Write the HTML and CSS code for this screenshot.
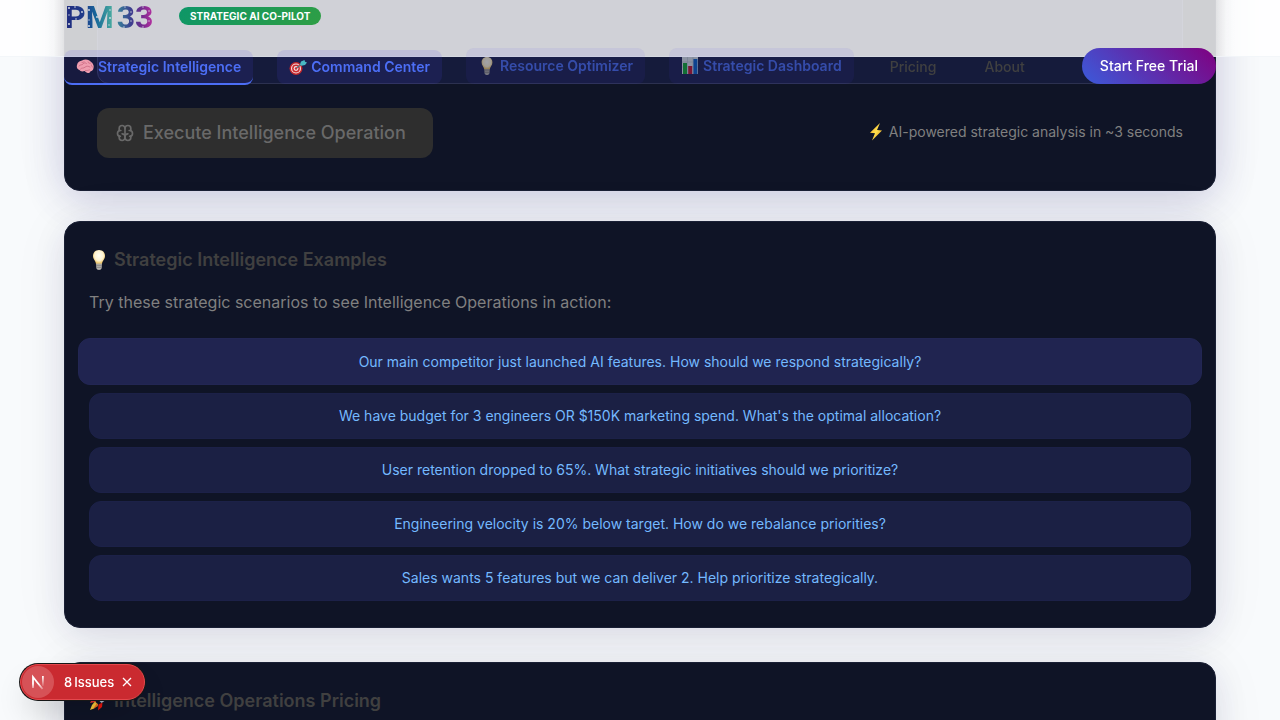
FILE: index.html
```html
<!DOCTYPE html>
<html lang="en">
<head>
<meta charset="utf-8">
<meta name="viewport" content="width=device-width, initial-scale=1">
<title>PM33 Strategic Intelligence</title>
<link rel="stylesheet" href="styles.css">
</head>
<body>
<svg class="defs" aria-hidden="true">
  <defs>
    <radialGradient id="glass" cx=".5" cy=".4" r=".6"><stop offset="0" stop-color="#fffef4"/><stop offset=".6" stop-color="#fff3cf"/><stop offset="1" stop-color="#e9b94c"/></radialGradient>
    <linearGradient id="bolt" x1="0" y1="0" x2="1" y2="1"><stop offset="0" stop-color="#f29a1c"/><stop offset=".5" stop-color="#ffe24d"/><stop offset="1" stop-color="#d98410"/></linearGradient>
  </defs>
  <symbol id="i-bulb" viewBox="0 0 20 20">
    <path d="M10 0C6 0 4 2.800 4 6c0 3.300 2.600 4.500 3 8h6c.4-3.500 3-4.700 3-8 0-3.200-2-6-6-6z" fill="url(#glass)"/>
    <path d="M7 13.500h6l-.3 4.500c-.2 1.200-1.200 2-2.700 2s-2.500-.8-2.700-2z" fill="#b4b1ac"/>
    <path d="M7.200 15.300h5.600M7.400 17.300h5.200" stroke="#77736e" stroke-width=".7"/>
  </symbol>
  <symbol id="i-bolt" viewBox="0 0 16 18"><path d="M12 0L2 9.800l5 .4L4 17.500 14 7.500l-5-.5z" fill="url(#bolt)"/></symbol>
  <symbol id="i-target" viewBox="0 0 18 18">
    <circle cx="7" cy="10.500" r="6.500" fill="#c5262b"/><circle cx="7" cy="10.500" r="5" fill="#f4dfe0"/><circle cx="7" cy="10.500" r="3.900" fill="#cd2b30"/><circle cx="7" cy="10.500" r="2.400" fill="#f4dfe0"/><circle cx="7" cy="10.500" r="1.200" fill="#cd2b30"/>
    <path d="M7.500 10L14 5" stroke="#5b6d78" stroke-width="1.300"/><path d="M11 6.500l1-3L15.500 2l.5 1.700L18 4.500l-2 2.500-3.500.8z" fill="#49b8c4"/>
  </symbol>
  <symbol id="i-chart" viewBox="0 0 18 18">
    <path d="M1 0h16v17H1z" fill="#dce4ea"/><path d="M1 5h16M1 10h16M6.500 0v17M12 0v17" stroke="#b2c0c9" stroke-width=".6"/>
    <path d="M2 6h4v11H2z" fill="#12a832"/><path d="M7.200 9h4v8h-4z" fill="#c41431"/><path d="M12.400 2h4v15h-4z" fill="#0b60c9"/>
  </symbol>
  <symbol id="i-brain" viewBox="0 0 18 18">
    <path d="M1 7c.5-3 3-4 5-4.500C9 .8 13.500 1.500 15 4c2 1.200 3.200 3.500 2.500 6 0 2-1.500 3-3 3.200-.3 1.500-1.800 2.300-3.500 1.600-1-.3-1.800-1-2.300-1.800-2 .7-4.700.5-5.200-1C1.400 11.500.3 9.500 1 7z" fill="#ef9daf"/>
    <path d="M3 8c1.500-2 3-.5 4-2s2.500-1.500 3.500-.5M4.500 11c1.200-1.600 3-.4 4.500-1.800S12.500 8 14 9M6 4.500c1 .2 1.500 0 2-.8M12 4c.2 1.200 1.500 1.500 2.500 1.200M9.500 12.500c1.200.3 2.500-.2 4-.6M15.500 7c-.2 1 .2 1.500 1 2" fill="none" stroke="#c4607a" stroke-width=".7" stroke-linecap="round"/>
  </symbol>
  <symbol id="i-rocket" viewBox="0 0 20 20">
    <path d="M19 1c-5 0-8.500 2-11 6.500L12.500 12C17 9.500 19 6 19 1z" fill="#a9bccb"/><circle cx="13.500" cy="6.500" r="1.800" fill="#2465a6"/>
    <path d="M8.500 6.500L3 8l-2 4 5.500-1z" fill="#e5352d"/><path d="M13.500 11.500L13 16l-4 3.500.5-6z" fill="#e5150d"/>
    <path d="M6 10.500L3 14l-2 5 4-1.500 4-4z" fill="#f8c93a"/><path d="M8 12l-4 6 5-3z" fill="#f2711c"/>
  </symbol>
</svg>

<header class="header">
  <div class="brand-row">
    <svg class="logo" viewBox="0 0 91 32" role="img" aria-label="PM 33">
      <defs>
        <linearGradient id="ink" gradientUnits="userSpaceOnUse" x1="0" y1="0" x2="88" y2="0">
          <stop offset="0" stop-color="#20297c"/><stop offset=".24" stop-color="#1f3d8c"/>
          <stop offset=".36" stop-color="#17679a"/><stop offset=".54" stop-color="#46a89f"/>
          <stop offset=".62" stop-color="#387d9a"/><stop offset=".76" stop-color="#3b3f8f"/>
          <stop offset=".9" stop-color="#7a2a90"/><stop offset="1" stop-color="#b3309f"/>
        </linearGradient>
      </defs>
      <text class="logo-text" x="1" y="28" fill="url(#ink)">PM<tspan dx="3">33</tspan></text>
      <g fill="#d6dbe4">
        <circle cx="5" cy="8" r="1"/><circle cx="11" cy="7" r=".8"/><circle cx="5" cy="15" r=".7"/><circle cx="18" cy="12" r=".9"/><circle cx="5" cy="24" r="1"/><circle cx="12" cy="19" r=".8"/><circle cx="25" cy="10" r=".9"/><circle cx="25" cy="20" r=".7"/><circle cx="25" cy="26" r="1"/><circle cx="33" cy="17" r=".9"/><circle cx="46" cy="10" r=".8"/><circle cx="46" cy="18" r=".9"/><circle cx="45" cy="25" r=".7"/><circle cx="61" cy="7" r=".7"/><circle cx="67" cy="12" r=".7"/><circle cx="67" cy="21" r=".7"/><circle cx="60" cy="27" r=".7"/><circle cx="79" cy="7" r=".7"/><circle cx="85" cy="11" r=".7"/><circle cx="85" cy="21" r=".7"/><circle cx="79" cy="27" r=".7"/>
      </g>
    </svg>
    <span class="tag">STRATEGIC AI CO-PILOT</span>
  </div>
  <nav class="nav" aria-label="Main">
    <a class="tab tab-active" href="#intelligence"><svg class="icon"><use href="#i-brain"/></svg>Strategic Intelligence</a>
    <a class="tab" href="#command"><svg class="icon"><use href="#i-target"/></svg>Command Center</a>
    <a class="tab tab-dim" href="#optimizer"><svg class="icon"><use href="#i-bulb"/></svg>Resource Optimizer</a>
    <a class="tab tab-dim" href="#dashboard"><svg class="icon"><use href="#i-chart"/></svg>Strategic Dashboard</a>
    <a class="link" href="#pricing">Pricing</a>
    <a class="link" href="#about">About</a>
    <button class="trial" type="button">Start Free Trial</button>
  </nav>
</header>

<main class="page">
  <section class="card operation" id="intelligence">
    <textarea class="prompt" aria-label="Strategic question"></textarea>
    <div class="actions">
      <button class="execute" type="button" disabled>
        <svg class="brain" viewBox="0 0 24 24" aria-hidden="true"><path d="M15.500 13a3.500 3.500 0 0 0-3.500 3.500v1a3.500 3.500 0 0 0 7 0v-1.800"/><path d="M8.500 13a3.500 3.500 0 0 1 3.500 3.500v1a3.500 3.500 0 0 1-7 0v-1.800"/><path d="M17.500 16a3.500 3.500 0 0 0 0-7h-.5"/><path d="M19 9.300v-2.800a3.500 3.500 0 0 0-7 0"/><path d="M6.500 16a3.500 3.500 0 0 1 0-7h.5"/><path d="M5 9.300v-2.800a3.500 3.500 0 0 1 7 0v10"/></svg>
        Execute Intelligence Operation
      </button>
      <p class="hint"><svg class="bolt"><use href="#i-bolt"/></svg>AI-powered strategic analysis in ~3 seconds</p>
    </div>
  </section>

  <section class="card examples">
    <h2 class="title"><svg class="title-icon"><use href="#i-bulb"/></svg>Strategic Intelligence Examples</h2>
    <p class="lead">Try these strategic scenarios to see Intelligence Operations in action:</p>
    <div class="scenarios">
      <button class="scenario scenario-hot" type="button">Our main competitor just launched AI features. How should we respond strategically?</button>
      <button class="scenario" type="button">We have budget for 3 engineers OR $150K marketing spend. What's the optimal allocation?</button>
      <button class="scenario" type="button">User retention dropped to 65%. What strategic initiatives should we prioritize?</button>
      <button class="scenario" type="button">Engineering velocity is 20% below target. How do we rebalance priorities?</button>
      <button class="scenario" type="button">Sales wants 5 features but we can deliver 2. Help prioritize strategically.</button>
    </div>
  </section>

  <section class="card pricing" id="pricing">
    <h2 class="title"><svg class="title-icon"><use href="#i-rocket"/></svg>Intelligence Operations Pricing</h2>
  </section>
</main>

<aside class="issues">
  <button class="issues-open" type="button">
    <span class="mark"><svg viewBox="0 0 32 32" aria-hidden="true"><defs><linearGradient id="n1" gradientUnits="userSpaceOnUse" x1="0" y1="10" x2="0" y2="23"><stop offset=".6" stop-color="#fff"/><stop offset="1" stop-color="#fff" stop-opacity=".3"/></linearGradient><linearGradient id="n2" gradientUnits="userSpaceOnUse" x1="0" y1="10" x2="0" y2="21"><stop offset="0" stop-color="#fff"/><stop offset="1" stop-color="#fff" stop-opacity="0"/></linearGradient></defs><path d="M11 22V11L20.500 23" fill="none" stroke="url(#n1)" stroke-width="1.800"/><path d="M20 10h1.800v10H20z" fill="url(#n2)"/></svg></span>
    <span class="count"><span>8</span><span>Issues</span></span>
  </button>
  <button class="issues-close" type="button" aria-label="Dismiss"><svg viewBox="0 0 12 12" aria-hidden="true"><path d="M2 2l8 8M10 2l-8 8"/></svg></button>
</aside>
</body>
</html>
```
FILE: styles.css
```css
* { box-sizing: border-box; }
body {
  margin: 0;
  height: 100vh;
  overflow: hidden;
  background: #f8fafc;
  color: #808080;
  font: 16px/24px Inter, "Noto Sans", sans-serif;
}
button, textarea { font: inherit; }
a { text-decoration: none; }
p, h2 { margin: 0; }
.defs { position: absolute; width: 0; height: 0; }

/* Header */
.header {
  position: fixed;
  inset: 0 0 auto;
  z-index: 10;
  height: 57px;
  padding: 0 64px;
  background:
    linear-gradient(to left, rgba(30, 30, 30, .1), rgba(30, 30, 30, .02) 10px, rgba(30, 30, 30, 0) 20px) left / 64px 100% no-repeat,
    linear-gradient(to right, rgba(30, 30, 30, .1), rgba(30, 30, 30, .02) 10px, rgba(30, 30, 30, 0) 20px) right / 64px 100% no-repeat,
    rgba(255, 255, 255, .8);
  border-bottom: 1px solid rgba(226, 232, 240, .4);
}
.brand-row { display: flex; align-items: center; gap: 24px; height: 32px; }
.logo { width: 91px; height: 32px; overflow: visible; }
.logo-text { font: 700 32px Roboto, sans-serif; }
.tag {
  padding: 0 11px;
  border-radius: 9px;
  background: linear-gradient(135deg, #0d9668, #2f9e44);
  color: #fff;
  font-size: 10px;
  font-weight: 700;
  line-height: 18px;
}
.nav { display: flex; align-items: flex-start; gap: 24px; margin-top: 16px; }
.tab {
  display: flex;
  align-items: center;
  gap: 4px;
  height: 34px;
  margin-top: 2px;
  padding: 0 12px;
  border-radius: 8px;
  background: rgba(79, 70, 229, .13);
  color: #4c6ef5;
  font-size: 14px;
  font-weight: 600;
  white-space: nowrap;
}
.icon { width: 18px; height: 18px; }
.tab-active { border-bottom: 2px solid #4c6ef5; height: 35px; }
.tab-dim { height: 36px; margin-top: 0; opacity: .6; }
.link { margin-top: 2px; padding: 0 12px; color: #404040; font-size: 14px; font-weight: 500; line-height: 34px; }
.trial {
  height: 36px;
  margin-left: auto;
  padding: 0 18px;
  border: 0;
  border-radius: 18px;
  background: linear-gradient(45deg, #3b5bdb, #800080);
  color: #fff;
  font-size: 14px;
  font-weight: 500;
}

/* Cards */
.page { display: flex; flex-direction: column; margin-top: -120px; padding: 0 64px; }
.card {
  padding: 24px;
  border: 1px solid #1a2035;
  border-radius: 16px;
  background: #0f1426;
  box-shadow: 0 8px 32px rgba(35, 30, 90, .1), 0 4px 60px rgba(15, 20, 60, .06);
}
.operation { padding: 32px; box-shadow: 0 8px 40px rgba(55, 48, 140, .2), 0 4px 60px rgba(15, 20, 60, .06); }
.prompt {
  display: block;
  width: 100%;
  height: 171px;
  border: 1px solid #2c3150;
  border-radius: 12px;
  background: #151b3b;
  resize: none;
}
.actions { display: flex; align-items: center; justify-content: space-between; margin-top: 24px; }
.execute {
  display: flex;
  align-items: center;
  gap: 8px;
  height: 50px;
  padding: 0 27px 0 18px;
  border: 0;
  border-radius: 12px;
  background: #2e2e2e;
  color: #696969;
  font-size: 18px;
  font-weight: 500;
}
.brain { width: 20px; height: 20px; fill: none; stroke: currentColor; stroke-width: 2; stroke-linejoin: round; stroke-linecap: round; }
.hint { display: flex; align-items: center; gap: 5px; padding-bottom: 2px; font-size: 14px; }
.bolt { width: 16px; height: 18px; }
.examples { margin-top: 30px; padding-bottom: 26px; }
.title { display: flex; align-items: center; gap: 5px; color: #404040; font-size: 18px; font-weight: 600; line-height: 28px; }
.title-icon { width: 20px; height: 20px; }
.lead { margin-top: 16px; }
.scenarios { display: flex; flex-direction: column; gap: 8px; margin-top: 24px; }
.scenario {
  min-height: 46px;
  border: 1px solid #1c2148;
  border-radius: 12px;
  background: #1b2044;
  color: #74b9ff;
  font-size: 14px;
}
.scenario-hot { min-height: 47px; margin: 0 -11px; border-color: #222653; background: #202450; }
.pricing { margin-top: 34px; min-height: 160px; }

/* Issue indicator */
.issues {
  position: fixed;
  left: 20px;
  bottom: 20px;
  z-index: 20;
  display: flex;
  align-items: center;
  height: 36px;
  padding: 0 8px 0 1px;
  border: 1px solid #e5484d;
  border-radius: 18px;
  background: #ca2a30;
  box-shadow: 0 0 0 1px #171717, 0 16px 32px -8px rgba(0, 0, 0, .24);
}
.issues button { display: flex; align-items: center; padding: 0; border: 0; background: none; color: #fff; }
.issues .issues-open { gap: 10px; font-size: 13px; font-weight: 500; }
.count { display: flex; gap: 2px; }
.mark { width: 32px; height: 32px; border-radius: 16px; background: #d65257; }
.mark svg { display: block; width: 32px; height: 32px; }
.issues .issues-close { width: 18px; height: 18px; margin-left: 4px; justify-content: center; }
.issues-close svg { width: 12px; height: 12px; stroke: #fff; stroke-width: 1.300; }
```
